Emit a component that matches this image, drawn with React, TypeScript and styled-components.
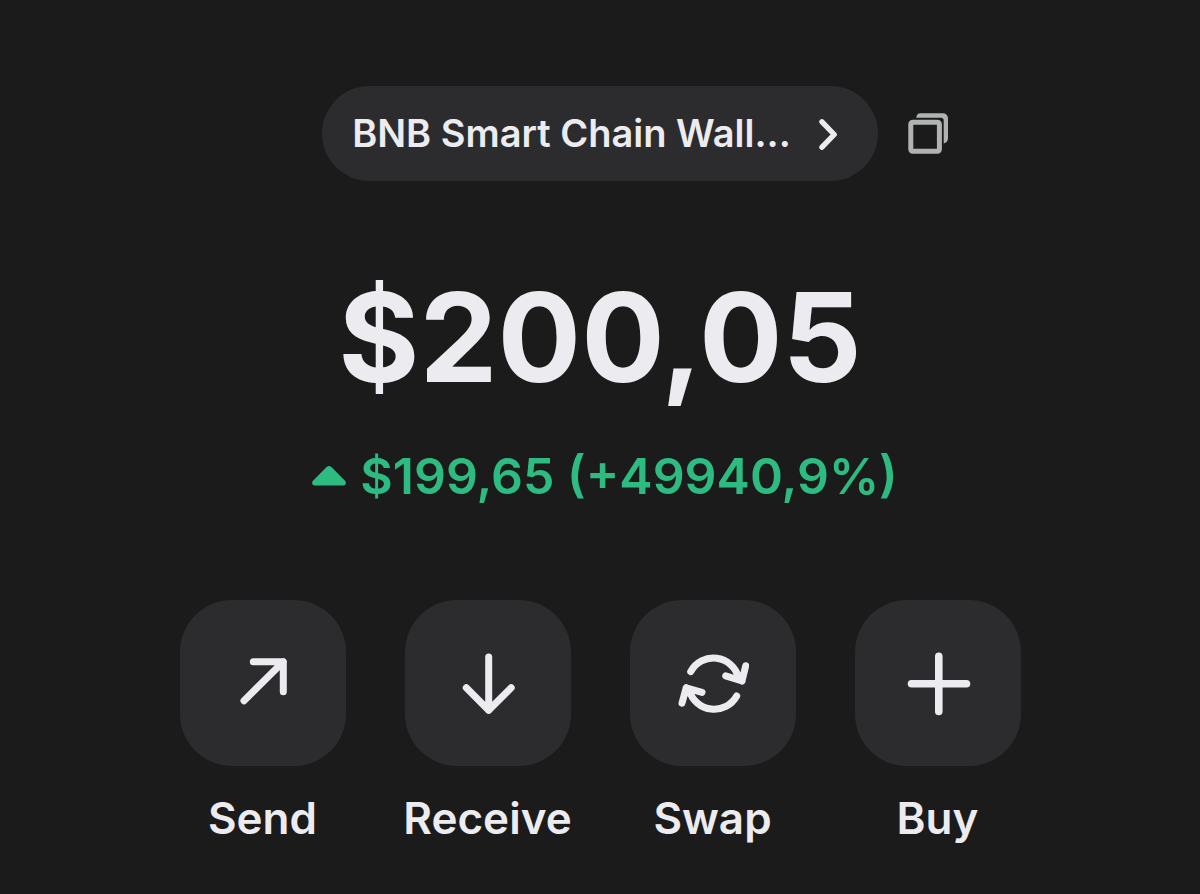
import React from "react";
import styled, { createGlobalStyle } from "styled-components";

const GlobalStyle = createGlobalStyle`
  *, *::before, *::after { box-sizing: border-box; }
  body {
    margin: 0;
    background: #1b1b1b;
    color: #ececf0;
    font-family: Inter, "Liberation Sans", sans-serif;
  }
  button {
    font: inherit;
    color: inherit;
    border: 0;
    padding: 0;
    background: none;
    cursor: pointer;
  }
  svg { display: block; flex: none; }
`;

const Screen = styled.main`
  display: flex;
  flex-direction: column;
  align-items: center;
  padding: 86px 24px 46px;
`;

const Header = styled.header`
  display: grid;
  grid-template-columns: 1fr auto 1fr;
  align-items: center;
  column-gap: 30px;
  width: 100%;
`;

const WalletButton = styled.button`
  grid-column: 2;
  display: flex;
  align-items: center;
  gap: 27px;
  height: 95px;
  padding: 0 40px 0 30px;
  border-radius: 48px;
  background: #2c2c2e;
  font-size: 38px;
  font-weight: 600;
  line-height: 48px;
  white-space: nowrap;
`;

const WalletName = styled.span`
  padding-bottom: 2px;
`;

const CopyButton = styled.button`
  justify-self: start;
  color: #b1b3b3;
`;

const Balance = styled.h1`
  margin: 92px 0 0;
  font-size: 124px;
  font-weight: 700;
  line-height: 128px;
`;

const Change = styled.p`
  display: flex;
  align-items: center;
  gap: 14px;
  margin: 43px 0 0;
  padding-left: 10px;
  color: #2dbb82;
  font-size: 50px;
  font-weight: 600;
  line-height: 64px;
  white-space: nowrap;
`;

const Actions = styled.nav`
  display: flex;
  justify-content: center;
  gap: 59px;
  margin-top: 92px;
`;

const Action = styled.button`
  display: flex;
  flex-direction: column;
  align-items: center;
  gap: 24px;
  width: 166px;
  font-size: 44px;
  font-weight: 600;
  line-height: 56px;
  white-space: nowrap;
`;

const Tile = styled.span`
  display: grid;
  place-items: center;
  width: 166px;
  height: 166px;
  border-radius: 52px;
  background: #2c2c2e;
`;

const StrokeIcon = styled.svg.attrs({
  viewBox: "0 0 72 72",
  width: 72,
  height: 72,
  "aria-hidden": true,
})`
  fill: none;
  stroke: currentColor;
  stroke-width: 7;
  stroke-linecap: round;
  stroke-linejoin: round;
`;

const HeavyStroke = styled.g`
  stroke-width: 7.6;
`;

const actions = [
  {
    label: "Send",
    icon: <path d="M17 53.7 56.3 14.7M26.3 14.7h30v30" />,
  },
  {
    label: "Receive",
    icon: <path d="M36.7 10v53.3M14.3 40.8l22.4 22.5 22.5-22.5" />,
  },
  {
    label: "Swap",
    icon: (
      <>
        <path d="M13.7 24.7A25.8 25.8 0 0 1 61.5 30.6L65 34M68.7 18.7 65 34 48.7 28.9" />
        <path d="M59.7 49A25.8 25.8 0 0 1 12.4 43.7L9.2 40.8M5 56.1 9.2 40.8 25 45.3" />
      </>
    ),
  },
  {
    label: "Buy",
    icon: (
      <HeavyStroke>
        <path d="M36.8 9.3v55.2M9.5 36.8h55" />
      </HeavyStroke>
    ),
  },
];

export default function App() {
  return (
    <>
      <GlobalStyle />
      <Screen>
        <Header>
          <WalletButton type="button">
            <WalletName>BNB Smart Chain Wall...</WalletName>
            <svg width="20" height="32" viewBox="0 0 20 32" fill="none" aria-hidden="true">
              <path
                d="M4 3.8 16.2 16.5 4 29.2"
                stroke="currentColor"
                strokeWidth="5.4"
                strokeLinecap="round"
                strokeLinejoin="round"
              />
            </svg>
          </WalletButton>
          <CopyButton type="button" aria-label="Copy address">
            <svg width="40" height="41" viewBox="0 0 40 41" aria-hidden="true">
              <rect
                x="2.8"
                y="9.2"
                width="28.6"
                height="29"
                rx="2"
                fill="none"
                stroke="currentColor"
                strokeWidth="5"
              />
              <path
                fill="currentColor"
                d="M8.2 4.7C8.4 2 10 .2 12.4.2H35a5 5 0 0 1 5 5V25c0 3-1.6 5-4.3 5.4V7.4c0-1.8-.9-2.7-2.7-2.7z"
              />
            </svg>
          </CopyButton>
        </Header>
        <Balance>$200,05</Balance>
        <Change>
          <svg width="34" height="20" viewBox="0 0 34 20" aria-hidden="true">
            <path
              fill="currentColor"
              d="M14.6 1.1a3.6 3.6 0 0 1 4.8 0L33 14.8c1.7 1.9.8 4.6-1.8 4.6H2.8C.2 19.4-.7 16.7 1 14.8z"
            />
          </svg>
          $199,65 (+49940,9%)
        </Change>
        <Actions aria-label="Wallet actions">
          {actions.map(({ label, icon }) => (
            <Action type="button" key={label}>
              <Tile>
                <StrokeIcon>{icon}</StrokeIcon>
              </Tile>
              {label}
            </Action>
          ))}
        </Actions>
      </Screen>
    </>
  );
}
